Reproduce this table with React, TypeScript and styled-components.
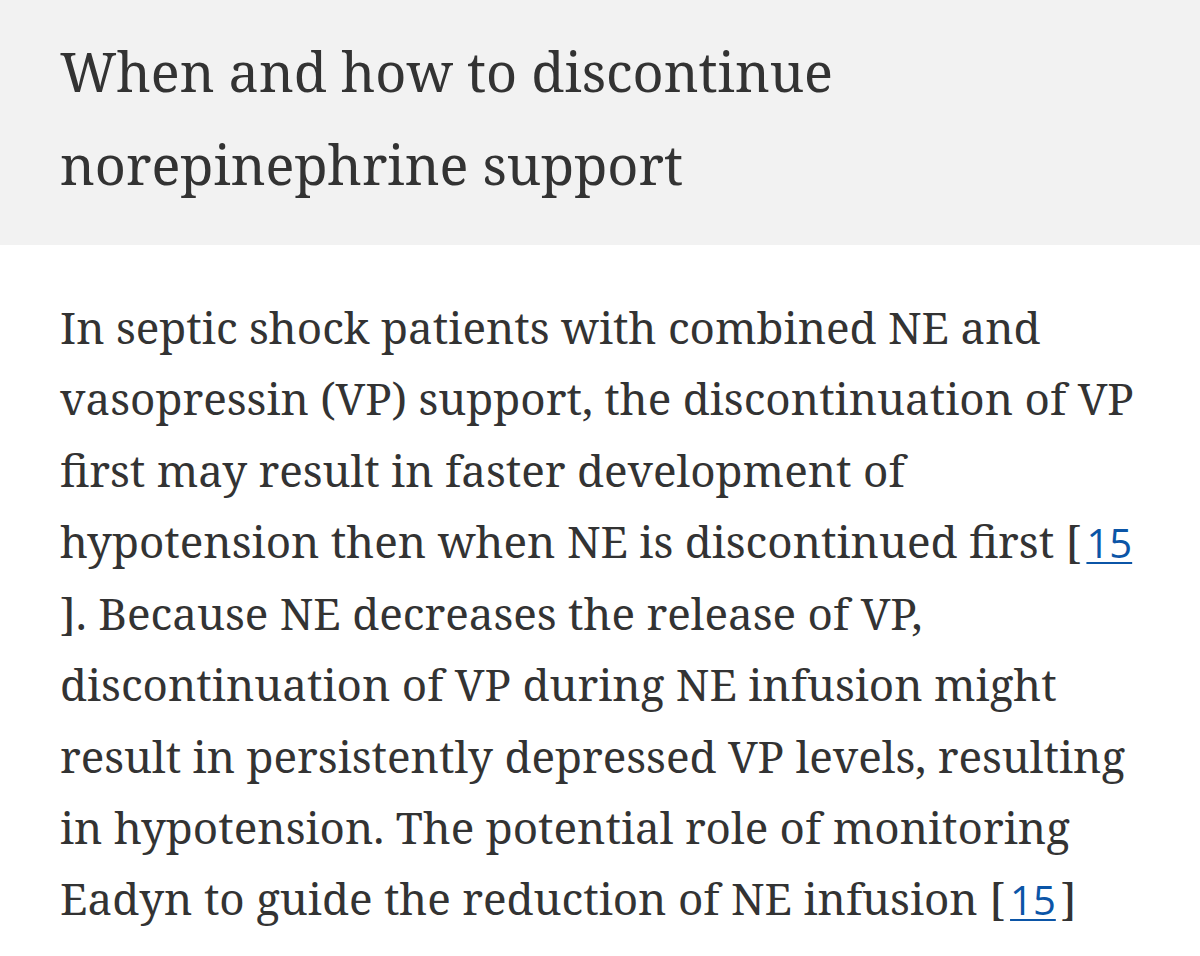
import React from 'react';
import styled, { createGlobalStyle } from 'styled-components';

const GlobalStyle = createGlobalStyle`
  html, body {
    margin: 0;
    padding: 0;
    background: #ffffff;
  }
  body {
    font-family: "Noto Serif", "DejaVu Serif", Georgia, serif;
    color: #333333;
    -webkit-font-smoothing: antialiased;
  }
`;

const Article = styled.article`
  width: 1200px;
`;

const SectionHeader = styled.header`
  background-color: #f2f2f2;
  padding: 25px 60px 34px;
`;

const Title = styled.h2`
  margin: 0;
  font-size: 54px;
  font-weight: 400;
  line-height: 93px;
  color: #333333;
`;

const Body = styled.div`
  padding: 47px 58px 0 60px;
`;

const Paragraph = styled.p`
  margin: 0;
  font-size: 44px;
  line-height: 71.25px;
  color: #333333;
`;

const CiteLink = styled.a`
  display: inline-block;
  padding: 0 5px;
  font-family: "Open Sans", "Noto Sans", sans-serif;
  font-size: 40px;
  line-height: inherit;
  color: #0b55a7;
  text-decoration: underline;
  text-decoration-thickness: 2px;
  text-underline-offset: 4px;
`;

const Cite = ({ n }: { n: number }) => (
  <>
    [<CiteLink href={`#ref-CR${n}`}>{n}</CiteLink>]
  </>
);

export default function App() {
  return (
    <>
      <GlobalStyle />
      <Article>
        <SectionHeader>
          <Title>When and how to discontinue norepinephrine support</Title>
        </SectionHeader>
        <Body>
          <Paragraph>
            In septic shock patients with combined NE and vasopressin (VP) support, the
            discontinuation of VP first may result in faster development of hypotension then
            when NE is discontinued first <Cite n={15} />. Because NE decreases the release of
            VP, discontinuation of VP during NE infusion might result in persistently depressed
            VP levels, resulting in hypotension. The potential role of monitoring Eadyn to guide
            the reduction of NE infusion <Cite n={15} />
          </Paragraph>
        </Body>
      </Article>
    </>
  );
}
